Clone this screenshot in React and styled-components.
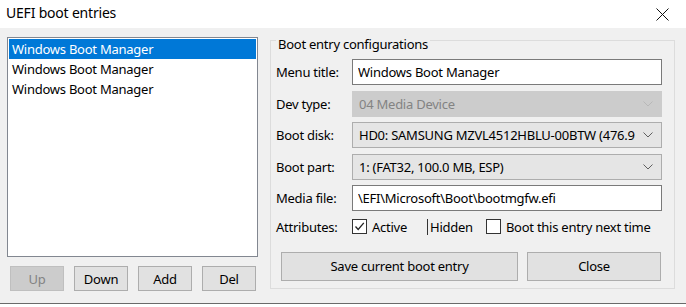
import styled, { createGlobalStyle } from "styled-components";
import { useState } from "react";

const GlobalStyle = createGlobalStyle`
  html, body {
    margin: 0;
    padding: 0;
  }
  body {
    width: 686px;
    height: 307px;
    overflow: hidden;
    background: #ffffff;
    font-family: "Noto Sans", "Open Sans", sans-serif;
    letter-spacing: -0.25px;
    color: #000000;
  }
  * {
    box-sizing: border-box;
  }
`;

const entries = ["Windows Boot Manager", "Windows Boot Manager", "Windows Boot Manager"];

function Chevron({ disabled }) {
  return (
    <svg width="10" height="6" viewBox="0 0 10 6">
      <path d="M0.5 0.5 L5 5 L9.5 0.5" fill="none" stroke={disabled ? "#b8b8b8" : "#5f5f5f"} strokeWidth="1" />
    </svg>
  );
}

function CheckBox({ checked, label }) {
  return (
    <CheckLabel>
      <Box>
        {checked && (
          <svg width="13" height="13" viewBox="0 0 13 13">
            <path d="M2.5 6.5 L5.2 9.5 L10.8 2.8" fill="none" stroke="#222" strokeWidth="1.3" />
          </svg>
        )}
      </Box>
      {label}
    </CheckLabel>
  );
}

export default function App() {
  const [selected, setSelected] = useState(0);

  return (
    <Window>
      <GlobalStyle />
      <TitleBar>
        <Title>UEFI boot entries</Title>
        <svg width="13" height="13" viewBox="0 0 13 13">
          <path d="M0.5 0.5 L12.5 12.5 M12.5 0.5 L0.5 12.5" stroke="#111" strokeWidth="1" />
        </svg>
      </TitleBar>
      <Body>
        <LeftPane>
          <ListBox>
            {entries.map((e, i) => (
              <ListItem key={i} selected={i === selected} onClick={() => setSelected(i)}>
                {e}
              </ListItem>
            ))}
          </ListBox>
          <ButtonRow>
            <SmallButton disabled>Up</SmallButton>
            <SmallButton>Down</SmallButton>
            <SmallButton>Add</SmallButton>
            <SmallButton>Del</SmallButton>
          </ButtonRow>
        </LeftPane>
        <GroupBox>
          <Legend>Boot entry configurations</Legend>
          <Form>
            <Label>Menu title:</Label>
            <TextBox readOnly value="Windows Boot Manager" />
            <Label>Dev type:</Label>
            <Combo disabled>
              <span>04 Media Device</span>
              <Chevron disabled />
            </Combo>
            <Label>Boot disk:</Label>
            <Combo>
              <span>HD0: SAMSUNG MZVL4512HBLU-00BTW (476.9</span>
              <Chevron />
            </Combo>
            <Label>Boot part:</Label>
            <Combo>
              <span>1: (FAT32, 100.0 MB, ESP)</span>
              <Chevron />
            </Combo>
            <Label>Media file:</Label>
            <TextBox readOnly value="\EFI\Microsoft\Boot\bootmgfw.efi" />
            <Label>Attributes:</Label>
            <Attributes>
              <CheckBox checked label="Active" />
              <HiddenFlag>Hidden</HiddenFlag>
              <CheckBox label="Boot this entry next time" />
            </Attributes>
          </Form>
          <ActionRow>
            <ActionButton width={237}>Save current boot entry</ActionButton>
            <ActionButton width={134}>Close</ActionButton>
          </ActionRow>
        </GroupBox>
      </Body>
      <Footer />
    </Window>
  );
}

const Window = styled.div`
  width: 686px;
  height: 307px;
  display: flex;
  flex-direction: column;
`;

const TitleBar = styled.div`
  height: 28px;
  flex-shrink: 0;
  background: #ffffff;
  display: flex;
  align-items: center;
  justify-content: space-between;
  padding: 0 17px 0 6px;
`;

const Title = styled.div`
  font-size: 14px;
  letter-spacing: -0.2px;
  color: #000000;
  margin-top: -3px;
`;

const Body = styled.div`
  height: 275px;
  flex-shrink: 0;
  background: #f0f0f0;
  display: flex;
  align-items: flex-start;
  padding-left: 7px;
`;

const LeftPane = styled.div`
  width: 251px;
  margin-top: 9px;
  display: flex;
  flex-direction: column;
`;

const ListBox = styled.div`
  height: 220px;
  background: #ffffff;
  border: 1px solid #828790;
  padding: 1px;
`;

const ListItem = styled.div`
  height: 20px;
  line-height: 20px;
  padding-left: 3px;
  font-size: 13px;
  cursor: default;
  background: ${(p) => (p.selected ? "#0078d7" : "transparent")};
  color: ${(p) => (p.selected ? "#ffffff" : "#000000")};
`;

const ButtonRow = styled.div`
  display: flex;
  gap: 10px;
  margin-top: 9px;
  padding-left: 3px;
`;

const SmallButton = styled.button`
  width: 54px;
  height: 25px;
  font-family: inherit;
  letter-spacing: inherit;
  font-size: 13px;
  padding: 0;
  border: 1px solid ${(p) => (p.disabled ? "#bfbfbf" : "#adadad")};
  background: ${(p) => (p.disabled ? "#cccccc" : "#e1e1e1")};
  color: ${(p) => (p.disabled ? "#838383" : "#000000")};
`;

const GroupBox = styled.fieldset`
  width: 405px;
  margin: 0 0 0 12px;
  padding: 7px 12px 7px 5px;
  border: 1px solid #dcdcdc;
  min-width: 0;
`;

const Legend = styled.legend`
  font-size: 13px;
  line-height: 16px;
  padding: 8px 2px 0;
  margin-left: 0;
`;

const Form = styled.div`
  display: grid;
  grid-template-columns: 76px 310px;
  grid-template-rows: repeat(5, 26px) 20px;
  row-gap: 5.5px;
  align-items: center;
`;

const Label = styled.div`
  font-size: 13px;
`;

const TextBox = styled.input`
  height: 26px;
  width: 100%;
  border: 1px solid #7a7a7a;
  background: #ffffff;
  font-family: inherit;
  letter-spacing: inherit;
  font-size: 13px;
  padding: 0 5px;
  color: #000000;
  outline: none;
`;

const Combo = styled.div`
  height: 26px;
  display: flex;
  align-items: center;
  justify-content: space-between;
  padding: 0 8px 0 6px;
  font-size: 13px;
  border: 1px solid ${(p) => (p.disabled ? "#cccccc" : "#adadad")};
  background: ${(p) => (p.disabled ? "#cccccc" : "#e5e5e5")};
  color: ${(p) => (p.disabled ? "#838383" : "#000000")};
  white-space: nowrap;
  overflow: hidden;
`;

const Attributes = styled.div`
  display: flex;
  align-items: center;
  font-size: 13px;
`;

const CheckLabel = styled.label`
  display: flex;
  align-items: center;
  gap: 5px;
`;

const Box = styled.span`
  width: 15px;
  height: 15px;
  border: 1px solid #333333;
  background: #ffffff;
  display: flex;
  align-items: center;
  justify-content: center;
`;

const HiddenFlag = styled.span`
  margin: 0 13px 0 20px;
  border-left: 1px solid #333333;
  padding-left: 2px;
  line-height: 16px;
`;

const ActionRow = styled.div`
  display: flex;
  gap: 9px;
  margin-top: 15px;
  padding-left: 5px;
`;

const ActionButton = styled.button`
  width: ${(p) => p.width}px;
  height: 29px;
  font-family: inherit;
  letter-spacing: inherit;
  font-size: 13px;
  border: 1px solid #adadad;
  background: #e1e1e1;
  color: #000000;
  padding: 0;
`;

const Footer = styled.div`
  flex: 1;
  border-top: 1px solid #6a6a6a;
  background: #ffffff;
`;
